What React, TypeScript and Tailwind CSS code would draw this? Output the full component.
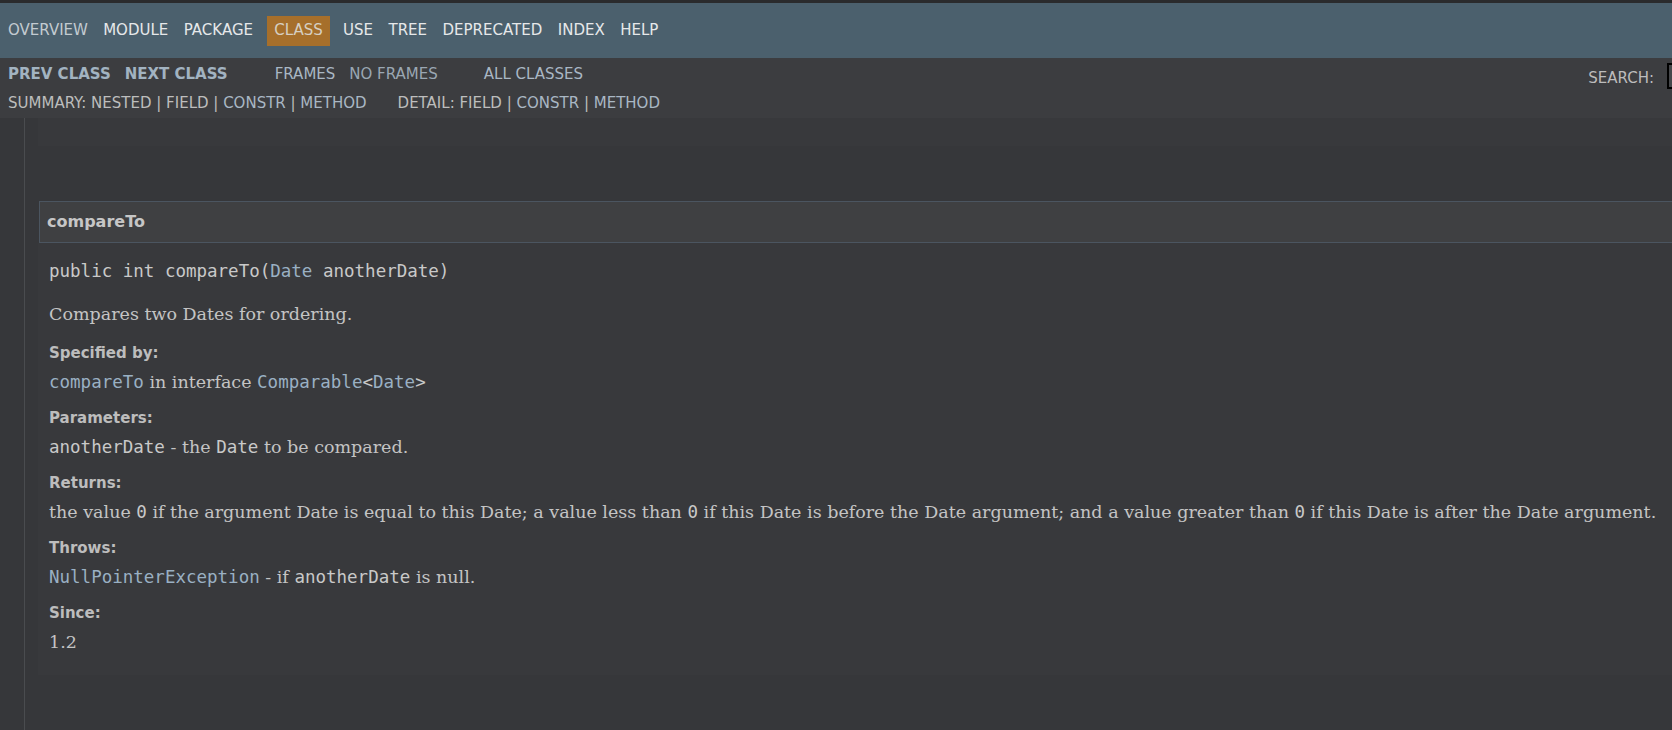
import React from "react";

const sans = "font-['DejaVu_Sans',sans-serif]";
const serif = "font-['DejaVu_Serif',serif]";
const mono = "font-['DejaVu_Sans_Mono',monospace]";

const navItems = ["OVERVIEW", "MODULE", "PACKAGE", "CLASS", "USE", "TREE", "DEPRECATED", "INDEX", "HELP"];

function Code({ children, link }: { children: React.ReactNode; link?: boolean }) {
  return <code className={`${mono} text-[17.5px] ${link ? "text-[#9ab0c3]" : "text-[#c9c9c9]"}`}>{children}</code>;
}

function Label({ children }: { children: React.ReactNode }) {
  return <dt className={`${sans} font-bold text-[15px] leading-[19px] text-[#bdbdbd]`}>{children}</dt>;
}

function Value({ children }: { children: React.ReactNode }) {
  return <dd className={`${serif} text-[17.5px] leading-[22px] text-[#c4c4c4] mt-[8px] mb-[16px]`}>{children}</dd>;
}

export default function App() {
  return (
    <div className="w-[1672px] h-[730px] overflow-hidden bg-[#36373a] flex flex-col">
      <div className="h-[3px] shrink-0 bg-[#2a2b2d]" />

      {/* top nav */}
      <nav className={`h-[55px] shrink-0 bg-[#4b606d] flex items-center ${sans} text-[15px]`}>
        {navItems.map((item, i) =>
          item === "CLASS" ? (
            <span key={item} className="ml-[6px] mr-[5px] px-[7.5px] h-[30px] flex items-center bg-[#a66f2b] text-[#d6cfc3]">
              {item}
            </span>
          ) : (
            <span
              key={item}
              className={`${i === 0 ? "pl-[8px] pr-[7.5px] text-[#c3cbd1]" : "px-[7.75px] text-[#e6e8ea]"}`}
            >
              {item}
            </span>
          )
        )}
      </nav>

      {/* sub nav */}
      <div className={`h-[60px] shrink-0 bg-[#3c3d40] ${sans} text-[15px] pt-[5px] pl-[8px] flex flex-col gap-[10px]`}>
        <div className="h-[19px] flex items-start">
          <span className="font-bold text-[#a2b3c1]">PREV CLASS</span>
          <span className="ml-[14px] font-bold text-[#a2b3c1]">NEXT CLASS</span>
          <span className="ml-[47px] text-[#a9b7c4]">FRAMES</span>
          <span className="ml-[14px] text-[#9aa7b3]">NO FRAMES</span>
          <span className="ml-[46px] text-[#a9b7c4]">ALL CLASSES</span>
          <div className="ml-auto mr-[-145px] flex items-start pt-[4px] shrink-0">
            <span className="text-[#bcbcbc]">SEARCH:</span>
            <div className="ml-[13px] mt-[-4px] w-[150px] h-[26px] border-2 border-black bg-[#45474a]" />
          </div>
        </div>
        <div className="h-[19px] flex items-start text-[#bdbdbd]">
          <span>
            SUMMARY: NESTED | FIELD | <span className="text-[#a9b7c4]">CONSTR</span> |{" "}
            <span className="text-[#a9b7c4]">METHOD</span>
          </span>
          <span className="ml-[31px]">
            DETAIL: FIELD | <span className="text-[#a9b7c4]">CONSTR</span> |{" "}
            <span className="text-[#a9b7c4]">METHOD</span>
          </span>
        </div>
      </div>

      {/* content */}
      <div className="flex-1 flex">
        <div className="w-[25px] shrink-0 border-r border-[#4a4c4f]" />
        <div className="flex-1 pl-[13px] flex flex-col">
          <div className="h-[28px] shrink-0 bg-[#38393c]" />
          <div className="h-[55px] shrink-0" />

          <div className="h-[42px] shrink-0 ml-px border border-r-0 border-[#4b5560] bg-[#3f4042] flex items-center pl-[7px]">
            <h4 className={`${sans} font-bold text-[16px] text-[#c6c6c6]`}>compareTo</h4>
          </div>

          <div className="h-[432px] shrink-0 bg-[#38393c] pl-[11px] pt-[17px]">
            <pre className={`${mono} text-[17.5px] leading-[22px] text-[#c9c9c9]`}>
              public int compareTo(<span className="text-[#9ab0c3]">Date</span> anotherDate)
            </pre>
            <p className={`${serif} text-[17.5px] leading-[22px] text-[#c4c4c4] mt-[21px]`}>
              Compares two Dates for ordering.
            </p>
            <dl className="mt-[19px]">
              <Label>Specified by:</Label>
              <Value>
                <Code link>compareTo</Code> in interface <Code link>Comparable</Code>
                <Code>&lt;</Code>
                <Code link>Date</Code>
                <Code>&gt;</Code>
              </Value>
              <Label>Parameters:</Label>
              <Value>
                <Code>anotherDate</Code> - the <Code>Date</Code> to be compared.
              </Value>
              <Label>Returns:</Label>
              <Value>
                the value <Code>0</Code> if the argument Date is equal to this Date; a value less than{" "}
                <Code>0</Code> if this Date is before the Date argument; and a value greater than{" "}
                <Code>0</Code> if this Date is after the Date argument.
              </Value>
              <Label>Throws:</Label>
              <Value>
                <Code link>NullPointerException</Code> - if <Code>anotherDate</Code> is null.
              </Value>
              <Label>Since:</Label>
              <Value>1.2</Value>
            </dl>
          </div>
        </div>
      </div>
    </div>
  );
}
